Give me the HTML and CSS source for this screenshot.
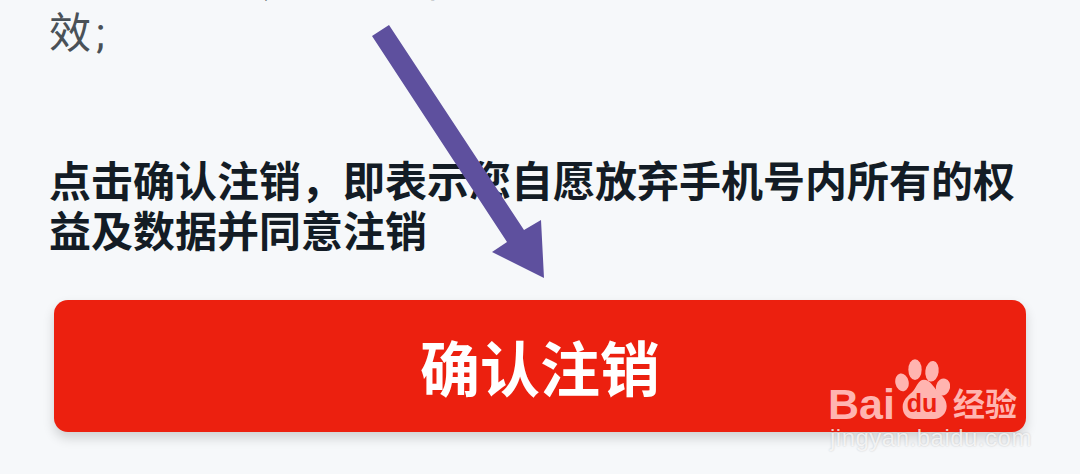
FILE: index.html
```html
<!DOCTYPE html>
<html lang="zh-CN">
<head>
<meta charset="utf-8">
<title>确认注销</title>
<link rel="stylesheet" href="styles.css">
</head>
<body>
<main class="page">
  <p class="notice">注销成功后，手机号内的所有权益及数据将全部失效<span class="semi">;</span></p>
  <p class="confirm">点击确认注销，即表示您自愿放弃手机号内所有的权益及数据并同意注销</p>
  <button class="action">确认注销</button>
</main>
<svg class="arrow" viewBox="0 0 1080 474" aria-hidden="true">
  <polygon points="372,36 389,25 524,230 541,220 544,278 492,252 507,242"/>
</svg>
<div class="mark">
  <div class="mark-row">
    <span class="mark-bai">Bai</span>
    <svg class="paw" viewBox="345 58 165 180" aria-hidden="true">
      <ellipse cx="366" cy="128" rx="20" ry="27" transform="rotate(-12 366 128)"/>
      <ellipse cx="405" cy="90" rx="20" ry="31"/>
      <ellipse cx="456" cy="95" rx="20" ry="31" transform="rotate(8 456 95)"/>
      <ellipse cx="489" cy="142" rx="21" ry="26" transform="rotate(15 489 142)"/>
      <path d="M432 120c18 0 26 18 40 34 14 14 28 24 28 46 0 22-17 38-38 38h-60c-20 0-34-14-34-36 0-20 14-32 28-44 14-14 18-38 36-38z"/>
      <text class="paw-du" x="380" y="217">du</text>
    </svg>
    <span class="mark-cn">经验</span>
  </div>
  <div class="mark-url">jingyan.baidu.com</div>
</div>
</body>
</html>
```
FILE: styles.css
```css
html, body { margin: 0; height: 100%; }
body {
  width: 1080px;
  height: 474px;
  overflow: hidden;
  background: #f6f8fa;
  position: relative;
  font-family: Roboto, "Noto Sans CJK SC", "Liberation Sans", sans-serif;
}
.page { padding: 0 54px; margin-top: -44px; }
.notice {
  margin: 0 0 0 -5px;
  width: 970px;
  font-size: 42px;
  line-height: 52px;
  color: #4a5157;
}
.semi { margin-left: 5px; }
.confirm {
  margin: 98px 0 0 -5px;
  width: 970px;
  font-size: 42px;
  line-height: 50px;
  font-weight: 700;
  color: #131c25;
}
.action {
  display: block;
  margin-top: 42px;
  width: 972px;
  height: 132px;
  border: 0;
  border-radius: 14px;
  background: #ec200f;
  color: #fff;
  font: 700 60px/1 "Noto Sans CJK SC", sans-serif;
  box-shadow: 0 6px 12px rgba(0,0,0,.16);
}
.arrow { position: absolute; left: 0; top: 0; width: 1080px; height: 474px; fill: #5e509e; }
.mark { position: absolute; left: 830px; top: 359px; width: 195px; color: #ffb4b0; }
.mark-row { display: flex; align-items: flex-end; height: 60px; }
.mark-bai { width: 67px; margin-left: -2px; flex: none; font: 700 43px/30px "Liberation Sans", sans-serif; }
.paw { width: 55px; height: 60px; fill: #ffb4b0; flex: none; }
.paw-du { font: 700 75px "Liberation Sans", sans-serif; fill: #ec200f; }
.mark-cn { font: 700 32px/34px "Noto Sans CJK SC", sans-serif; margin-left: 3px; white-space: nowrap; }
.mark-url { font: 400 24px/26px "Liberation Sans", sans-serif; color: rgba(255,255,255,.75); letter-spacing: .5px; margin-top: 6px; text-shadow: 0 0 2px rgba(0,0,0,.2); white-space: nowrap; }
```
